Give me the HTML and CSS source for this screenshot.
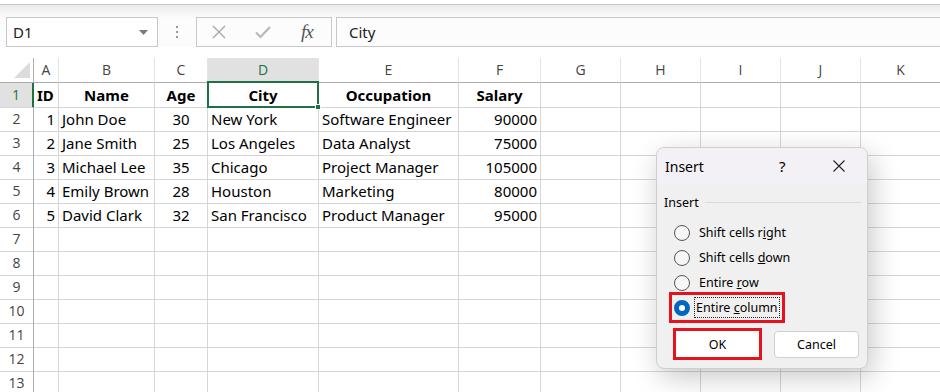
FILE: index.html
```html
<!DOCTYPE html>
<html lang="en">
<head>
    <meta charset="UTF-8">
    <meta name="viewport" content="width=device-width, initial-scale=1.0">
    <title>Insert - Excel</title>
    <link rel="stylesheet" href="styles.css">
</head>
<body>
    <!-- Ribbon bottom edge -->
    <div class="ribbon-edge"></div>
    <div class="ribbon-shade"></div>

    <!-- Formula Bar -->
    <div class="formula-bar">
        <div class="name-box">
            <span>D1</span>
            <svg width="9" height="5" viewBox="0 0 9 5"><path d="M0 0 L9 0 L4.5 5 Z" fill="#7a7a7a"/></svg>
        </div>
        <div class="grip"><span></span><span></span><span></span></div>
        <div class="fx-box">
            <svg width="14" height="14" viewBox="0 0 14 14"><path d="M1 1 L13 13 M13 1 L1 13" stroke="#a6a6a6" stroke-width="1.3" fill="none"/></svg>
            <svg width="16" height="14" viewBox="0 0 16 14"><path d="M1 7.5 L5.5 12 L15 2" stroke="#b8b8b8" stroke-width="2.2" fill="none"/></svg>
            <span class="fx">fx</span>
        </div>
        <div class="formula-input">City</div>
    </div>

    <!-- Sheet -->
    <div class="sheet">
        <div class="row head">
            <div class="corner"><svg width="16" height="16" viewBox="0 0 16 16"><path d="M16 0 L16 16 L0 16 Z" fill="#dcdcdc"/></svg></div>
            <div>A</div><div>B</div><div>C</div><div class="active-col">D</div><div>E</div><div>F</div><div>G</div><div>H</div><div>I</div><div>J</div><div>K</div>
        </div>
        <div class="row">
            <div class="rh active-row">1</div>
            <div class="b">ID</div><div class="b c">Name</div><div class="b c">Age</div><div class="b c sel">City</div><div class="b c">Occupation</div><div class="b c">Salary</div><div></div><div></div><div></div><div></div><div></div>
        </div>
        <div class="row">
            <div class="rh">2</div>
            <div class="r">1</div><div>John Doe</div><div class="c">30</div><div>New York</div><div>Software Engineer</div><div class="r">90000</div><div></div><div></div><div></div><div></div><div></div>
        </div>
        <div class="row">
            <div class="rh">3</div>
            <div class="r">2</div><div>Jane Smith</div><div class="c">25</div><div>Los Angeles</div><div>Data Analyst</div><div class="r">75000</div><div></div><div></div><div></div><div></div><div></div>
        </div>
        <div class="row">
            <div class="rh">4</div>
            <div class="r">3</div><div>Michael Lee</div><div class="c">35</div><div>Chicago</div><div>Project Manager</div><div class="r">105000</div><div></div><div></div><div></div><div></div><div></div>
        </div>
        <div class="row">
            <div class="rh">5</div>
            <div class="r">4</div><div>Emily Brown</div><div class="c">28</div><div>Houston</div><div>Marketing</div><div class="r">80000</div><div></div><div></div><div></div><div></div><div></div>
        </div>
        <div class="row">
            <div class="rh">6</div>
            <div class="r">5</div><div>David Clark</div><div class="c">32</div><div>San Francisco</div><div>Product Manager</div><div class="r">95000</div><div></div><div></div><div></div><div></div><div></div>
        </div>
        <div class="row"><div class="rh">7</div><div></div><div></div><div></div><div></div><div></div><div></div><div></div><div></div><div></div><div></div><div></div></div>
        <div class="row"><div class="rh">8</div><div></div><div></div><div></div><div></div><div></div><div></div><div></div><div></div><div></div><div></div><div></div></div>
        <div class="row"><div class="rh">9</div><div></div><div></div><div></div><div></div><div></div><div></div><div></div><div></div><div></div><div></div><div></div></div>
        <div class="row"><div class="rh">10</div><div></div><div></div><div></div><div></div><div></div><div></div><div></div><div></div><div></div><div></div><div></div></div>
        <div class="row"><div class="rh">11</div><div></div><div></div><div></div><div></div><div></div><div></div><div></div><div></div><div></div><div></div><div></div></div>
        <div class="row"><div class="rh">12</div><div></div><div></div><div></div><div></div><div></div><div></div><div></div><div></div><div></div><div></div><div></div></div>
        <div class="row"><div class="rh">13</div><div></div><div></div><div></div><div></div><div></div><div></div><div></div><div></div><div></div><div></div><div></div></div>

        <!-- Insert Dialog -->
        <div class="dialog">
            <div class="dialog-title">
                <span class="title-text">Insert</span>
                <span class="help">?</span>
                <svg class="close" width="12" height="12" viewBox="0 0 12 12"><path d="M0.5 0.5 L11.5 11.5 M11.5 0.5 L0.5 11.5" stroke="#222" stroke-width="1.1" fill="none"/></svg>
            </div>
            <div class="dialog-body">
                <div class="group-label"><span>Insert</span></div>
                <div class="options">
                    <div class="option"><span class="radio"></span><span>Shift cells r<u>i</u>ght</span></div>
                    <div class="option"><span class="radio"></span><span>Shift cells <u>d</u>own</span></div>
                    <div class="option"><span class="radio"></span><span>Entire <u>r</u>ow</span></div>
                    <div class="option marked"><span class="radio checked"></span><span class="focus">Entire <u>c</u>olumn</span></div>
                </div>
                <div class="buttons">
                    <div class="ok-mark"><button class="btn">OK</button></div>
                    <button class="btn cancel">Cancel</button>
                </div>
            </div>
        </div>
    </div>
</body>
</html>
```

FILE: styles.css
```css
body {
    margin: 0;
    width: 940px;
    height: 392px;
    overflow: hidden;
    background-color: #fff;
    font-family: "Noto Sans", "Open Sans", sans-serif;
    color: #000;
}
.ribbon-edge {
    height: 4px;
    border-bottom: 1px solid #c9c9c9;
}
.ribbon-shade {
    height: 12px;
    background: linear-gradient(#ebebeb, #fafafa);
}
.formula-bar {
    display: flex;
    height: 30px;
    padding-left: 6px;
    margin-bottom: 11px;
    background-color: #fcfcfc;
}
.name-box {
    width: 152px;
    box-sizing: border-box;
    border: 1px solid #c8c8c8;
    background-color: #fff;
    display: flex;
    align-items: center;
    justify-content: space-between;
    padding: 0 9px 0 6px;
    font-size: 15px;
    color: #222;
}
.grip {
    width: 38px;
    display: flex;
    flex-direction: column;
    align-items: center;
    justify-content: center;
    gap: 3px;
}
.grip span {
    width: 2px;
    height: 2px;
    background-color: #9a9a9a;
}
.fx-box {
    width: 136px;
    box-sizing: border-box;
    border: 1px solid #c8c8c8;
    display: flex;
    align-items: center;
    padding-left: 15px;
    gap: 29px;
}
.fx {
    font-family: "Liberation Serif", serif;
    font-style: italic;
    font-size: 19px;
    color: #555;
    margin-left: 1px;
    letter-spacing: -1px;
}
.formula-input {
    flex: 1;
    margin-left: 4px;
    border: 1px solid #c8c8c8;
    border-right: none;
    display: flex;
    align-items: center;
    padding-left: 12px;
    font-size: 15px;
    color: #222;
}
.sheet {
    position: relative;
}
.row {
    display: grid;
    grid-template-columns: 34px 25px 96px 53px 111px 140px 82px 80px 80px 80px 80px 80px;
    height: 24px;
}
.row > div {
    box-sizing: border-box;
    border-right: 1px solid #d6d6d6;
    border-bottom: 1px solid #d6d6d6;
    padding: 0 3px;
    font-size: 15px;
    line-height: 24px;
    white-space: nowrap;
}
.row.head {
    height: 25px;
}
.row.head > div {
    text-align: center;
    color: #444;
    font-family: "Open Sans", sans-serif;
    font-size: 14px;
    line-height: 24px;
    border-right-color: #e4e4e4;
    border-bottom-color: #ababab;
}
.row.head > .corner {
    border-right-color: #ababab;
    display: flex;
    align-items: flex-end;
    justify-content: flex-end;
    padding: 0 3px 4px 0;
}
.rh {
    text-align: center;
    color: #444;
    font-family: "Open Sans", sans-serif;
    font-size: 14px !important;
    border-right-color: #ababab !important;
}
.row.head > .active-col {
    background-color: #e1e1e1;
    color: #1e7145;
    border-bottom: 1px solid #1e7145;
}
.active-row {
    background-color: #e1e1e1;
    color: #1e7145 !important;
    border-right: 2px solid #1e7145 !important;
}
.b {
    font-weight: bold;
}
.c {
    text-align: center;
}
.r {
    text-align: right;
}
.sel {
    position: relative;
}
.sel::after {
    content: '';
    position: absolute;
    left: -1px;
    top: -2px;
    right: -1px;
    bottom: -1px;
    border: 2px solid #1e7145;
}
.sel::before {
    content: '';
    position: absolute;
    right: -3px;
    bottom: -3px;
    width: 6px;
    height: 6px;
    background-color: #1e7145;
    border: 1px solid #fff;
    box-sizing: border-box;
    z-index: 1;
}

/* Insert dialog */
.dialog {
    position: absolute;
    left: 656px;
    top: 89px;
    width: 212px;
    height: 222px;
    box-sizing: border-box;
    border: 1px solid #cfcfcf;
    border-radius: 8px;
    background-color: #f0f0f0;
    box-shadow: 4px 8px 28px rgba(0, 0, 0, 0.22);
    overflow: hidden;
    font-size: 12.5px;
}
.dialog-title {
    height: 36px;
    background-color: #f3f0f6;
    display: flex;
    align-items: center;
    padding-left: 8px;
    font-size: 14px;
}
.title-text {
    width: 114px;
}
.help {
    width: 54px;
    font-size: 15px;
}
.dialog-body {
    padding: 8px 6px 0 7px;
}
.group-label {
    display: flex;
    align-items: center;
    gap: 6px;
    height: 20px;
}
.group-label::after {
    content: '';
    flex: 1;
    height: 1px;
    background-color: #dadada;
}
.options {
    margin-top: 8px;
}
.option {
    display: flex;
    align-items: center;
    height: 25px;
    padding-left: 10px;
    gap: 9px;
}
.radio {
    width: 16px;
    height: 16px;
    box-sizing: border-box;
    border: 1px solid #555;
    border-radius: 50%;
    background-color: #f7f7f7;
    flex-shrink: 0;
}
.radio.checked {
    border: 5px solid #0067c0;
    background-color: #fff;
}
.option.marked {
    margin: -3px 0 0 5px;
    width: 116px;
    height: 31px;
    box-sizing: border-box;
    border: 3px solid #e3131f;
    padding-left: 2px;
    gap: 5px;
}
.focus {
    outline: 1px dotted #222;
    padding: 1px 1px;
}
.buttons {
    display: flex;
    align-items: center;
    margin-top: 5px;
    padding-left: 9px;
    gap: 12px;
}
.ok-mark {
    width: 89px;
    height: 32px;
    box-sizing: border-box;
    border: 3px solid #e3131f;
    display: flex;
}
.btn {
    font-family: "Noto Sans", sans-serif;
    font-size: 12.5px;
    background-color: #fff;
    border: none;
    padding: 0;
    color: #000;
}
.ok-mark .btn {
    flex: 1;
}
.btn.cancel {
    width: 85px;
    height: 27px;
    border: 1px solid #d0d0d0;
    border-radius: 4px;
}
```
